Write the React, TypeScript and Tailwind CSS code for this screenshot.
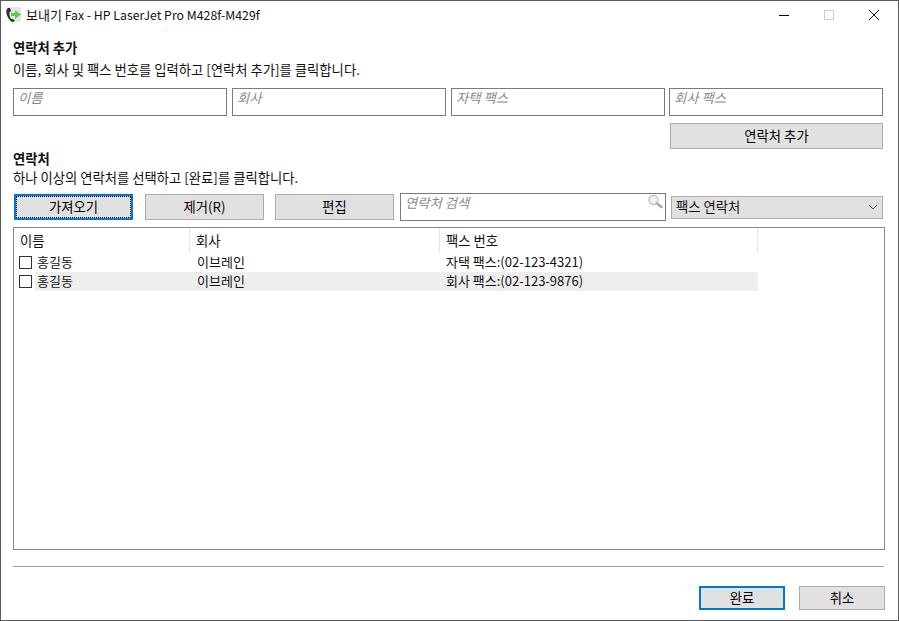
const font = { fontFamily: '"Noto Sans CJK KR", sans-serif' };

const fields = ['이름', '회사', '자택 팩스', '회사 팩스'];

const contacts = [
  { name: '홍길동', company: '이브레인', fax: '자택 팩스:(02-123-4321)', selected: false },
  { name: '홍길동', company: '이브레인', fax: '회사 팩스:(02-123-9876)', selected: true },
];

function FaxIcon() {
  return (
    <svg width="18" height="18" viewBox="0 0 18 18">
      <rect x="4" y="1" width="13" height="15" rx="2" fill="#e4e6e4" />
      <path d="M4 2 C1 4 2 11 8 16 L11 15 L9 13 L7 13 C5.500 11 5 8 5.500 6 L7 5 L6 2 Z" fill="#2b2b2b" />
      <path d="M7 7 H11 V4 L17 8.500 L11 13 V10 H7 Z" fill="#5fcb4f" />
    </svg>
  );
}

function SearchIcon() {
  return (
    <svg width="16" height="16" viewBox="0 0 16 16" className="shrink-0">
      <circle cx="6.500" cy="6" r="4.500" fill="#f2f2f2" stroke="#c4c4c4" strokeWidth="1.500" />
      <path d="M10 9.500 L14.500 13" stroke="#a8a8a8" strokeWidth="2.500" strokeLinecap="round" />
    </svg>
  );
}

function Button({ label, className }: { label: string; className: string }) {
  return (
    <button className={`flex items-center justify-center bg-[#e1e1e1] text-[13.33px] text-black ${className}`}>
      {label}
    </button>
  );
}

export default function App() {
  return (
    <div
      className="flex h-[621px] w-[899px] flex-col overflow-hidden border border-[#5a5a5a] bg-white text-[13.33px] text-[#111]"
      style={font}
    >
      <div className="flex h-[28px] shrink-0 items-center pl-[3px]">
        <FaxIcon />
        <span className="ml-[4px] text-[12.3px] leading-none">
          <span className="text-[13px]">보내기</span> Fax - HP LaserJet Pro M428f-M429f
        </span>
        <div className="ml-auto flex items-center">
          <div className="h-px w-[10px] bg-black" />
          <div className="ml-[35px] h-[10px] w-[10px] border border-[#cccccc]" />
          <svg width="10" height="10" viewBox="0 0 10 10" className="ml-[35px] mr-[19px]">
            <path d="M0 0 L10 10 M10 0 L0 10" stroke="#111" strokeWidth="1" />
          </svg>
        </div>
      </div>

      <div className="flex min-h-0 flex-1 flex-col pl-[12px] pr-[13px]">
        <div className="mt-[10px] h-[18px] font-bold leading-[18px]">연락처 추가</div>
        <div className="mt-[4px] h-[18px] leading-[18px]">이름, 회사 및 팩스 번호를 입력하고 [연락처 추가]를 클릭합니다.</div>

        <div className="mt-[9px] grid w-[870px] grid-cols-[214px_214px_214px_214px] gap-x-[5px]">
          {fields.map((f, i) => (
            <div
              key={f}
              className={`h-[28px] w-[214px] border border-[#7a7a7a] pl-[4px] italic leading-[18px] text-[#8a8a8a] ${i === 3 ? '-ml-px' : ''}`}
            >
              {f}
            </div>
          ))}
        </div>
        <div className="mt-[7px] flex w-[870px] justify-end">
          <Button label="연락처 추가" className="h-[26px] w-[213px] border border-[#adadad]" />
        </div>

        <div className="mt-px h-[18px] font-bold leading-[18px]">연락처</div>
        <div className="mt-px h-[18px] leading-[18px]">하나 이상의 연락처를 선택하고 [완료]를 클릭합니다.</div>

        <div className="mt-[6px] flex h-[28px] w-[870px] items-center">
          <button className="ml-px flex h-[26px] w-[119px] items-center justify-center border-2 border-[#0078d7] bg-[#e1e1e1] text-black outline-1 -outline-offset-3 outline-dotted outline-black">
            가져오기
          </button>
          <Button label="제거(R)" className="ml-[12px] h-[26px] w-[119px] border border-[#adadad]" />
          <Button label="편집" className="ml-[11px] h-[26px] w-[119px] border border-[#adadad]" />
          <div className="ml-[6px] flex h-[28px] w-[266px] justify-between border border-[#7a7a7a] pl-[4px] pr-[2px]">
            <span className="italic leading-[18px] text-[#8a8a8a]">연락처 검색</span>
            <SearchIcon />
          </div>
          <div className="ml-[5px] flex h-[23px] w-[212px] items-center justify-between border border-[#adadad] bg-[#e1e1e1] pl-[4px] pr-[4px]">
            <span className="leading-none">팩스 연락처</span>
            <svg width="10" height="6" viewBox="0 0 10 6">
              <path d="M1 1 L5 5 L9 1" fill="none" stroke="#555" strokeWidth="1" />
            </svg>
          </div>
        </div>

        <div className="mt-[6px] h-[323px] w-[872px] border border-[#828790] pr-[126px]">
          <div className="grid h-[25px] grid-cols-[176px_250px_318px] leading-[25px]">
            <div className="border-r border-[#e5e5e5] pl-[6px]">이름</div>
            <div className="border-r border-[#e5e5e5] pl-[6px]">회사</div>
            <div className="border-r border-[#e5e5e5] pl-[6px]">팩스 번호</div>
          </div>
          {contacts.map((c) => (
            <div key={c.fax} className="grid h-[19px] grid-cols-[176px_250px_318px] text-[13px] leading-[18px]">
              <div className="flex items-center pl-[5px]">
                <div className="h-[13px] w-[13px] shrink-0 border border-[#333] bg-white" />
                <div className={`ml-[3px] h-[19px] flex-1 pl-[2px] ${c.selected ? 'bg-[#eeeeee]' : ''}`}>{c.name}</div>
              </div>
              <div className={`pl-[7px] ${c.selected ? 'bg-[#eeeeee]' : ''}`}>{c.company}</div>
              <div className={`pl-[6px] ${c.selected ? 'bg-[#eeeeee]' : ''}`}>{c.fax}</div>
            </div>
          ))}
        </div>

        <div className="mt-[16px] h-px w-[871px] bg-[#a0a0a0]" />

        <div className="mt-[19px] flex w-[872px] justify-end">
          <Button label="완료" className="h-[24px] w-[86px] border-2 border-[#0078d7]" />
          <Button label="취소" className="ml-[14px] h-[24px] w-[86px] border border-[#adadad]" />
        </div>
      </div>
    </div>
  );
}
